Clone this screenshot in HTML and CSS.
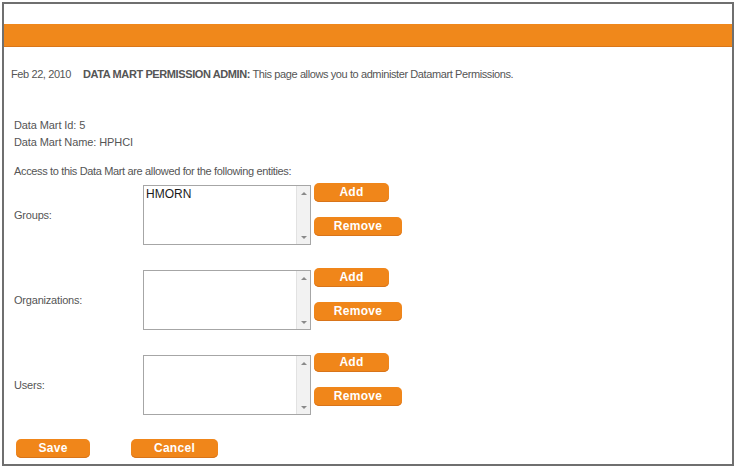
FILE: index.html
```html
<!DOCTYPE html>
<html>
<head>
<meta charset="utf-8">
<title>Data Mart Permission Admin</title>
<link rel="stylesheet" href="styles.css">
</head>
<body>
<div class="frame">
  <div class="bar"></div>
  <div class="content">
    <div class="header"><span class="date">Feb 22, 2010</span><b class="title">DATA MART PERMISSION ADMIN:</b> This page allows you to administer Datamart Permissions.</div>
    <div class="info">
      <div>Data Mart Id: 5</div>
      <div>Data Mart Name: HPHCI</div>
    </div>
    <div class="access">Access to this Data Mart are allowed for the following entities:</div>

    <div class="row">
      <div class="label">Groups:</div>
      <div class="listbox">
        <div class="items"><div class="item">HMORN</div></div>
        <div class="scroll"><span class="up"></span><span class="down"></span></div>
      </div>
      <div class="actions">
        <button class="btn add">Add</button>
        <button class="btn remove">Remove</button>
      </div>
    </div>

    <div class="row">
      <div class="label">Organizations:</div>
      <div class="listbox">
        <div class="items"></div>
        <div class="scroll"><span class="up"></span><span class="down"></span></div>
      </div>
      <div class="actions">
        <button class="btn add">Add</button>
        <button class="btn remove">Remove</button>
      </div>
    </div>

    <div class="row">
      <div class="label">Users:</div>
      <div class="listbox">
        <div class="items"></div>
        <div class="scroll"><span class="up"></span><span class="down"></span></div>
      </div>
      <div class="actions">
        <button class="btn add">Add</button>
        <button class="btn remove">Remove</button>
      </div>
    </div>

    <div class="footer">
      <button class="btn save">Save</button>
      <button class="btn cancel">Cancel</button>
    </div>
  </div>
</div>
</body>
</html>
```

FILE: styles.css
```css
html, body {
  margin: 0;
  padding: 0;
  background: #ffffff;
}

body {
  font-family: "Liberation Sans", Arial, sans-serif;
  font-size: 11px;
  color: #555555;
}

.frame {
  margin: 2px;
  width: 728px;
  height: 460px;
  border: 2px solid #6f6f6f;
  box-sizing: content-box;
}

.bar {
  margin-top: 20px;
  height: 22px;
  background: #f0881b;
  border-bottom: 1px solid #d9761a;
}

.content {
  padding-left: 10px;
}

.header {
  margin-top: 19px;
  margin-left: -3px;
  line-height: 16px;
  white-space: nowrap;
  letter-spacing: -0.4px;
}

.header .title {
  margin-left: 12px;
  font-weight: bold;
  color: #555555;
}

.info {
  margin-top: 35px;
  line-height: 17px;
  letter-spacing: -0.1px;
}

.access {
  margin-top: 12px;
  line-height: 17px;
  letter-spacing: -0.35px;
}

.row {
  display: flex;
  align-items: flex-start;
  margin-top: 3px;
  margin-bottom: 23px;
}

.row + .row {
  margin-top: 0;
}

.label {
  width: 129px;
  height: 60px;
  margin-top: 2px;
  display: flex;
  align-items: center;
  letter-spacing: -0.2px;
}

.listbox {
  width: 168px;
  height: 60px;
  margin-top: 2px;
  border: 1px solid #a6a6a6;
  box-sizing: border-box;
  display: flex;
  background: #ffffff;
}

.items {
  flex: 1;
  padding: 1px 2px;
}

.item {
  font-size: 12px;
  line-height: 14px;
  color: #1a1a1a;
}

.scroll {
  width: 13px;
  background: #f2f2f2;
  border-left: 1px solid #e2e2e2;
  display: flex;
  flex-direction: column;
  justify-content: space-between;
  align-items: center;
  padding: 6px 0 5px;
}

.up {
  width: 0;
  height: 0;
  border-left: 3px solid transparent;
  border-right: 3px solid transparent;
  border-bottom: 3px solid #8a8a8a;
}

.down {
  width: 0;
  height: 0;
  border-left: 3px solid transparent;
  border-right: 3px solid transparent;
  border-top: 3px solid #8a8a8a;
}

.actions {
  display: flex;
  flex-direction: column;
  align-items: flex-start;
  gap: 15px;
  margin-left: 3px;
}

.btn {
  height: 19px;
  padding: 0;
  border: none;
  border-radius: 5px;
  background: #f0861a;
  box-shadow: inset 0 -1px 0 #d8741a;
  color: #ffffff;
  font-family: "Liberation Sans", Arial, sans-serif;
  font-weight: bold;
  font-size: 12px;
  line-height: 19px;
  letter-spacing: 0.3px;
  text-align: center;
}

.add {
  width: 75px;
}

.remove {
  width: 88px;
}

.footer {
  display: flex;
  margin-top: 24px;
  margin-left: 2px;
}

.save {
  width: 74px;
}

.cancel {
  width: 87px;
  margin-left: 41px;
}
```
